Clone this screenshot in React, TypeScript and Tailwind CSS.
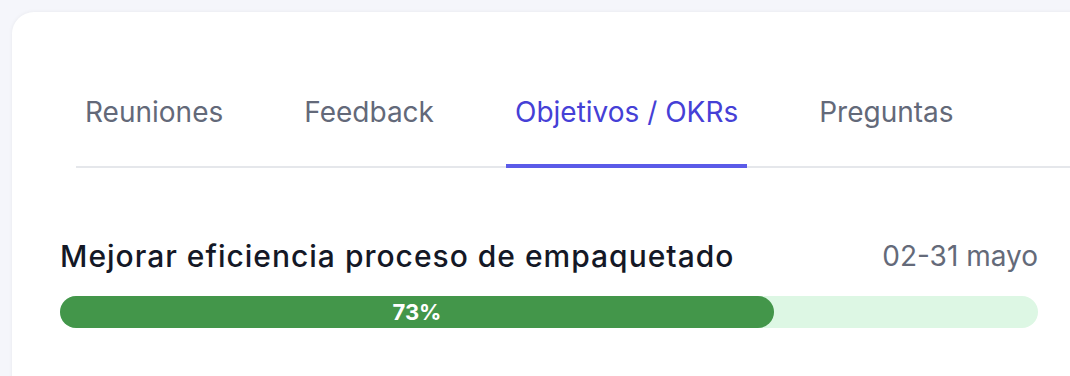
export default function App() {
  const tabs = ["Reuniones", "Feedback", "Objetivos / OKRs", "Preguntas"];
  const active = 2;
  const progress = 73;

  return (
    <div className="h-[376px] bg-[#f5f6fb] pl-3 pt-3 overflow-hidden font-['Inter',sans-serif]">
      <div className="-mr-10 h-[400px] rounded-tl-[22px] bg-white pl-12 pr-[72px] pt-[82px] shadow-[0_0_4px_rgba(15,23,42,0.06)]">
        <div className="ml-4 -mr-20 flex gap-[63px] border-b-2 border-gray-200">
          {tabs.map((t, i) => (
            <button
              key={t}
              className={
                i === active
                  ? "-mb-[2px] border-b-4 border-[#5b5be8] px-[9px] pb-[34px] text-[28px] leading-9 text-[#4540d6]"
                  : "-mb-[2px] border-b-4 border-transparent px-[9px] pb-[34px] text-[28px] leading-9 text-[#636979]"
              }
            >
              {t}
            </button>
          ))}
        </div>

        <div className="mt-[70px] flex items-center justify-between">
          <h2 className="text-[30px] font-medium leading-9 tracking-[1px] text-[#141826]">
            Mejorar eficiencia proceso de empaquetado
          </h2>
          <span className="text-[28px] leading-9 text-[#646a79]">02-31 mayo</span>
        </div>

        <div className="mt-[22px] h-8 w-full rounded-full bg-[#ddf7e4]">
          <div
            className="flex h-8 items-center justify-center rounded-full bg-[#43964a] text-[22px] font-bold text-white"
            style={{ width: `${progress}%` }}
          >
            {progress}%
          </div>
        </div>
      </div>
    </div>
  );
}
